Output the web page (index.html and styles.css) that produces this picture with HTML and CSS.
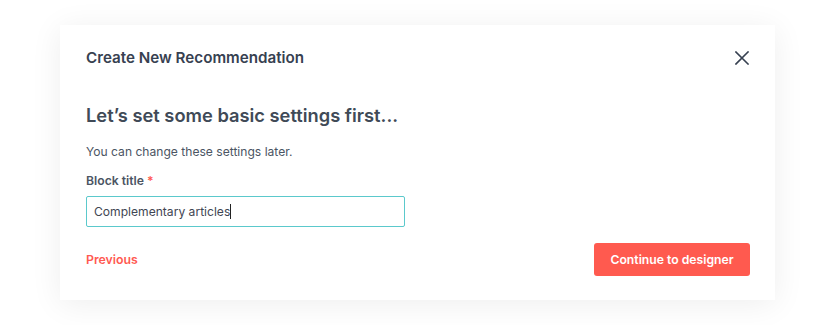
FILE: index.html
```html
<!DOCTYPE html>
<html>
<head>
<meta charset="utf-8">
<link rel="stylesheet" href="styles.css">
</head>
<body>
<div class="stage">
  <div class="modal">
    <div class="modal-header">
      <h2 class="modal-title">Create New Recommendation</h2>
      <button class="close" aria-label="Close">
        <svg width="14" height="14" viewBox="0 0 14 14"><path d="M1 1L13 13M13 1L1 13" stroke="#374151" stroke-width="1.6" stroke-linecap="square"/></svg>
      </button>
    </div>
    <h3 class="heading">Let’s set some basic settings first...</h3>
    <p class="sub">You can change these settings later.</p>
    <label class="label">Block title <span class="req">*</span></label>
    <div class="input"><span>Complementary articles</span><span class="caret"></span></div>
    <div class="footer">
      <a class="prev">Previous</a>
      <button class="primary">Continue to designer</button>
    </div>
  </div>
</div>
</body>
</html>
```
FILE: styles.css
```css
* { box-sizing: border-box; }
html, body { margin: 0; padding: 0; background: #fff; }
body { font-family: Inter, "Noto Sans", sans-serif; color: #3b4452; }
.stage { width: 835px; height: 325px; padding: 25px 0 0 60px; background: #fff; }
.modal {
  width: 715px; height: 275px; background: #fff;
  box-shadow: 0 4px 30px rgba(0,0,0,0.07);
  padding: 23px 25px 24px 26px;
  display: flex; flex-direction: column;
}
.modal-header { display: flex; justify-content: space-between; align-items: center; height: 20px; }
.modal-title { margin: 0; font-size: 15.2px; font-weight: 600; line-height: 20px; color: #374151; }
.close { border: 0; background: none; padding: 0; width: 14px; height: 14px; margin-right: 1px; display: flex; }
.heading { margin: 35px 0 0; font-size: 18.3px; font-weight: 600; line-height: 24px; color: #404a57; }
.sub { margin: 15px 0 0; font-size: 12.1px; line-height: 20px; color: #4b5563; }
.label { margin-top: 10px; font-size: 12.2px; font-weight: 600; line-height: 18px; color: #4b5563; display: block; }
.req { color: #ff5a52; }
.input {
  margin-top: 6px; width: 319px; height: 31px; border: 1px solid #5bc9cc; border-radius: 2px;
  padding: 0 7px; display: flex; align-items: center; font-size: 12.1px; color: #3f4653;
}
.caret { display: inline-block; width: 1px; height: 15px; background: #222; margin-left: 0; }
.footer { margin-top: 16px; display: flex; justify-content: space-between; align-items: center; }
.prev { color: #ff5a52; font-size: 12.3px; font-weight: 600; }
.primary {
  width: 156px; height: 33px; background: #ff5a4f; color: #fff; border: 0; border-radius: 3px;
  font-family: Inter, sans-serif; font-size: 12.2px; font-weight: 600;
}
```
